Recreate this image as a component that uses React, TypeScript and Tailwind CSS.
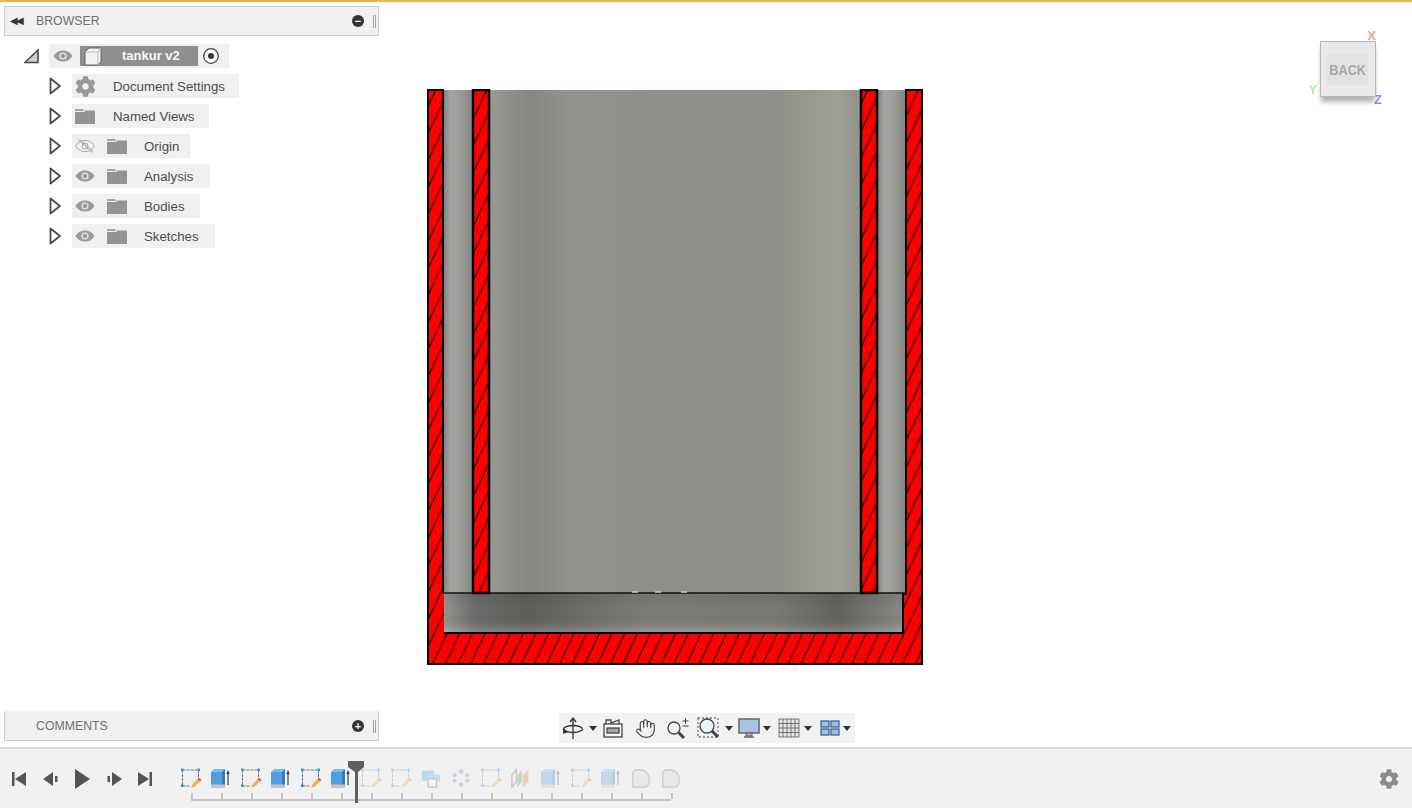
import { FaCog } from 'react-icons/fa'
import { Hand } from 'lucide-react'

// ─── Tree data ────────────────────────────────────────────────────────────────

const TREE_ROWS = [
  { label: 'Document Settings', kind: 'gear', pill: 'w-[167px]' },
  { label: 'Named Views', kind: 'named', pill: 'w-[137px]' },
  { label: 'Origin', kind: 'hidden', pill: 'w-[118px]' },
  { label: 'Analysis', kind: 'shown', pill: 'w-[138px]' },
  { label: 'Bodies', kind: 'shown', pill: 'w-[128px]' },
  { label: 'Sketches', kind: 'shown', pill: 'w-[143px]' },
] as const

const TIMELINE = [
  { kind: 'sketch', faded: false },
  { kind: 'extrude', faded: false },
  { kind: 'sketch', faded: false },
  { kind: 'extrude', faded: false },
  { kind: 'sketch', faded: false },
  { kind: 'extrude', faded: false },
  { kind: 'sketch', faded: true },
  { kind: 'sketch', faded: true },
  { kind: 'combine', faded: true },
  { kind: 'pattern', faded: true },
  { kind: 'sketch', faded: true },
  { kind: 'split', faded: true },
  { kind: 'extrude', faded: true },
  { kind: 'sketch', faded: true },
  { kind: 'extrude', faded: true },
  { kind: 'fillet', faded: true },
  { kind: 'fillet', faded: true },
] as const

// ─── Small icons ──────────────────────────────────────────────────────────────

function Eye({ off = false }: { off?: boolean }) {
  if (off) {
    return (
      <svg width="22" height="16" viewBox="0 0 22 16" fill="none" stroke="#a8a8a8" strokeWidth="1">
        <path d="M1.5 8C5 3 8 2.5 11 2.5S17 3 20.5 8C17 13 14 13.5 11 13.5S5 13 1.5 8Z" />
        <circle cx="11" cy="8" r="3" />
        <path d="M4 1.5 18 14.5M5.5 1 19.5 14" />
      </svg>
    )
  }
  return (
    <svg width="22" height="16" viewBox="0 0 22 16">
      <path d="M1.5 8C5 3 8 2.5 11 2.5S17 3 20.5 8C17 13 14 13.5 11 13.5S5 13 1.5 8Z" fill="#9a9a9a" />
      <circle cx="11" cy="8" r="3.6" fill="#e4e4e4" />
      <circle cx="11" cy="8" r="2.2" fill="#9a9a9a" />
    </svg>
  )
}

function Folder() {
  return (
    <svg width="22" height="16" viewBox="0 0 22 16" className="shrink-0">
      <path d="M1 1h8l1.5 2H1Z" fill="#a2a2a2" />
      <path d="M1 4h9l1.5-1.5H21V16H1Z" fill="#939393" />
    </svg>
  )
}

function Caret() {
  return (
    <svg width="14" height="18" viewBox="0 0 14 18" fill="#fff" stroke="#4a4a4a" strokeWidth="1.8">
      <path d="M2.5 1.5 12 9 2.5 16.5Z" strokeLinejoin="round" />
    </svg>
  )
}

function SketchIcon() {
  return (
    <svg width="22" height="22" viewBox="0 0 22 22">
      <path d="M2.500 3h16M2.500 3v16M2.500 19h8M18.500 3v9" stroke="#66717a" strokeWidth="1" strokeDasharray="3 1" fill="none" />
      <g fill="#3f8fd8">
        <rect x="1" y="1.500" width="2.500" height="2.500" />
        <rect x="17.500" y="1.500" width="2.500" height="2.500" />
        <rect x="1" y="17.500" width="2.500" height="2.500" />
      </g>
      <path d="M11 21l1.500-4 5-5 2.500 2.500-5 5Z" fill="#f0b650" />
      <path d="M17.500 12l1.500-1.500 2.500 2.500L20 14.500Z" fill="#ee4f4f" />
    </svg>
  )
}

function ExtrudeIcon() {
  return (
    <svg width="22" height="22" viewBox="0 0 22 22">
      <path d="M1 17.500h14V21l-2 0H1Z" fill="#c4c4c4" />
      <path d="M1 5l3-3h11v15.500H1Z" fill="#7dbcee" />
      <path d="M1 5h11v12.500H1Z" fill="#4f9fe3" />
      <path d="M12 5l3-3v15.500h-3Z" fill="#2f7cc0" />
      <path d="M18 18V5M16.800 7 18 4.500 19.200 7" stroke="#444" strokeWidth="1.200" fill="none" />
    </svg>
  )
}

function TimelineGlyph({ kind }: { kind: (typeof TIMELINE)[number]['kind'] }) {
  if (kind === 'sketch') return <SketchIcon />
  if (kind === 'extrude') return <ExtrudeIcon />
  if (kind === 'combine') {
    return (
      <svg width="22" height="22" viewBox="0 0 24 24">
        <path d="M2 4h13v11H2Z" fill="#4b9be0" />
        <path d="M8 8h14v8H8Z" fill="#6aaee6" />
        <rect x="9" y="13" width="9" height="9" fill="#fff" stroke="#666" strokeWidth="1.500" />
      </svg>
    )
  }
  if (kind === 'pattern') {
    return (
      <svg width="22" height="22" viewBox="0 0 24 24" fill="#4b9be0">
        <circle cx="12" cy="5" r="2.500" />
        <circle cx="12" cy="19" r="2.500" fill="#8a8a8a" />
        <circle cx="5" cy="9" r="2.200" fill="#8a8a8a" />
        <circle cx="19" cy="9" r="2.200" />
        <circle cx="5" cy="15" r="2.200" />
        <circle cx="19" cy="15" r="2.200" fill="#8a8a8a" />
      </svg>
    )
  }
  if (kind === 'split') {
    return (
      <svg width="22" height="22" viewBox="0 0 24 24">
        <path d="M2 22V9l5-6v13Z" fill="none" stroke="#666" strokeWidth="1.500" />
        <path d="M8 22V9l5-6v13Z" fill="#3fae49" />
        <path d="M14 22V9l6-6v13Z" fill="#e8772e" />
      </svg>
    )
  }
  return (
    <svg width="22" height="22" viewBox="0 0 24 24" fill="#d4d4d4" stroke="#777" strokeWidth="1.500">
      <path d="M3 22V8C3 5 5 3 8 3h3c6 0 10 5 10 10v3c0 3-3 6-6 6Z" />
    </svg>
  )
}

function NavCaret() {
  return (
    <svg width="8" height="5" viewBox="0 0 8 5" className="shrink-0">
      <path d="M0 0h8L4 5Z" fill="#333" />
    </svg>
  )
}

function PlayerIcon({ d }: { d: string }) {
  return (
    <svg width="20" height="20" viewBox="0 0 20 20" fill="#555">
      <path d={d} />
    </svg>
  )
}

// ─── Section drawing ──────────────────────────────────────────────────────────

function SectionDrawing() {
  const outerFill = 'M1 1H16V504H17V544H476V505H479V1H495V575H1Z'
  const outerLine = 'M17 544H476V505H479V1H495V575H1V1H16V504'
  return (
    <svg width="497" height="577" viewBox="0 0 497 577" className="block">
      <defs>
        <pattern id="hatch" width="12.700" height="27" patternUnits="userSpaceOnUse" patternTransform="translate(3 0)">
          <rect width="12.700" height="27" fill="#ff0000" />
          <path d="M-6.350 27 6.350 0M6.350 27 19.050 0" stroke="#2a0505" strokeWidth="1.300" />
        </pattern>
        <linearGradient id="wallGray" x1="0" x2="1" y1="0" y2="0">
          <stop offset="0" stop-color="#7f807c" />
          <stop offset="0.25" stop-color="#a4a5a0" />
          <stop offset="0.6" stop-color="#9a9b96" />
          <stop offset="1" stop-color="#83847f" />
        </linearGradient>
        <linearGradient id="centerGray" x1="0" x2="1" y1="0" y2="0">
          <stop offset="0" stop-color="#a3a49e" />
          <stop offset="0.1" stop-color="#999a93" />
          <stop offset="0.19" stop-color="#84867f" />
          <stop offset="0.28" stop-color="#92948d" />
          <stop offset="0.5" stop-color="#8d8f88" />
          <stop offset="0.72" stop-color="#8f9089" />
          <stop offset="0.85" stop-color="#a09f97" />
          <stop offset="0.93" stop-color="#8a8a83" />
          <stop offset="1" stop-color="#a6a49c" />
        </linearGradient>
        <linearGradient id="floorGray" x1="0" x2="1" y1="0" y2="0">
          <stop offset="0" stop-color="#959592" />
          <stop offset="0.07" stop-color="#6c6c6a" />
          <stop offset="0.18" stop-color="#5f5f5c" />
          <stop offset="0.45" stop-color="#7e7f7b" />
          <stop offset="0.72" stop-color="#7a7b76" />
          <stop offset="0.86" stop-color="#636360" />
          <stop offset="1" stop-color="#8a8a87" />
        </linearGradient>
        <linearGradient id="floorShade" x1="0" x2="0" y1="0" y2="1">
          <stop offset="0" stop-color="#000" stop-opacity="0.08" />
          <stop offset="0.5" stop-color="#000" stop-opacity="0" />
          <stop offset="1" stop-color="#fff" stop-opacity="0.22" />
        </linearGradient>
      </defs>

      <rect x="16" y="1" width="463" height="503" fill="url(#centerGray)" />
      <rect x="16" y="1" width="30" height="503" fill="url(#wallGray)" />
      <rect x="450" y="1" width="29" height="503" fill="url(#wallGray)" />
      <rect x="17" y="504" width="459" height="40" fill="url(#floorGray)" />
      <rect x="17" y="504" width="459" height="40" fill="url(#floorShade)" />

      <path d={outerFill} fill="url(#hatch)" />
      <path d={outerLine} fill="none" stroke="#000" strokeWidth="2" />
      <rect x="46" y="1" width="16" height="503" fill="url(#hatch)" stroke="#000" strokeWidth="2.500" />
      <rect x="434" y="1" width="16" height="503" fill="url(#hatch)" stroke="#000" strokeWidth="2.500" />
      <path d="M16 504H479" stroke="#111" strokeWidth="1.500" />
      <path d="M205 503h6M228 503h6M254 503h6" stroke="#c9c9c5" strokeWidth="1.500" />
    </svg>
  )
}

// ─── Panels ───────────────────────────────────────────────────────────────────

function PanelBar({ title, collapsed }: { title: string; collapsed: boolean }) {
  return (
    <div className={`flex h-[30px] w-[375px] items-center border border-[#cdcdcd] bg-[#f1f1f1] pl-[5px] pr-[1px] text-[12.300px] text-[#6f6f6f] ${collapsed ? 'border-t-[#f1f1f1]' : ''}`}>
      <span className="w-[26px] text-[10px] leading-none tracking-[-2px] text-[#333]">{collapsed ? '' : '◀◀'}</span>
      <span>{title}</span>
      <span className="ml-auto flex h-[12px] w-[12px] items-center justify-center rounded-full bg-[#333] text-[11px] font-bold leading-none text-white">
        {collapsed ? '+' : '−'}
      </span>
      <span className="ml-[9px] mr-[1px] h-[13px] w-[3px] border-x border-[#a5a5a5]" />
    </div>
  )
}

function Tree() {
  return (
    <div className="flex flex-col">
      <div className="ml-[20px] mt-[8px] flex h-[24px] items-center">
        <svg width="16" height="16" viewBox="0 0 16 16">
          <path d="M1 14.500 14 2V14.500Z" fill="#cfcfcf" stroke="#444" strokeWidth="1.500" />
        </svg>
        <div className="ml-[9px] flex h-[24px] w-[180px] items-center bg-[#f0f0f0] pl-[3px]">
          <Eye />
          <div className="ml-[6px] flex h-[20px] w-[118px] items-center bg-[#8f8f8f]">
            <svg width="24" height="20" viewBox="0 0 24 20" className="shrink-0">
              <path d="M5 6l4-4h12v14l-3 3H5Z" fill="#f2f2f2" stroke="#666" strokeWidth="1" />
              <path d="M5 6h13v13M18 6l3-4" fill="none" stroke="#bbb" strokeWidth="1" />
            </svg>
            <span className="ml-[18px] text-[13px] font-bold text-[#f6f6f6]">tankur v2</span>
          </div>
          <svg width="18" height="18" viewBox="0 0 18 18" className="ml-[4px]">
            <circle cx="9" cy="9" r="7.300" fill="#fff" stroke="#444" strokeWidth="1.300" />
            <circle cx="9" cy="9" r="3" fill="#333" />
          </svg>
        </div>
      </div>
      <div className="mt-[6px] flex flex-col gap-[6px]">
        {TREE_ROWS.map(row => (
          <div key={row.label} className="ml-[44px] flex h-[24px] items-center">
            <Caret />
            <div className={`ml-[10px] flex h-[24px] items-center bg-[#f0f0f0] text-[13.250px] text-[#4c4c4c] ${row.pill}`}>
              {row.kind === 'gear' && (
                <>
                  <FaCog className="ml-[3px] h-[21px] w-[21px] text-[#989898]" />
                  <span className="ml-[17px] mt-[1px]">{row.label}</span>
                </>
              )}
              {row.kind === 'named' && (
                <>
                  <span className="ml-[2px]">
                    <Folder />
                  </span>
                  <span className="ml-[17px] mt-[1px]">{row.label}</span>
                </>
              )}
              {(row.kind === 'hidden' || row.kind === 'shown') && (
                <>
                  <span className="ml-[2px]">
                    <Eye off={row.kind === 'hidden'} />
                  </span>
                  <span className="ml-[10px]">
                    <Folder />
                  </span>
                  <span className="ml-[16px] mt-[1px]">{row.label}</span>
                </>
              )}
            </div>
          </div>
        ))}
      </div>
    </div>
  )
}

function ViewCube() {
  return (
    <div className="absolute right-[25px] top-[23px] h-[84px] w-[80px]">
      <span className="absolute right-[11px] top-[1px] text-[13px] font-bold text-[#f59a9f] blur-[0.4px]">X</span>
      <span className="absolute bottom-[10px] left-[2px] text-[12px] font-bold text-[#a5eea5] blur-[0.4px]">Y</span>
      <span className="absolute bottom-0 right-[5px] text-[13px] font-bold text-[#8f8fee] blur-[0.4px]">Z</span>
      <div className="absolute left-[13px] top-[16px] flex h-[56px] w-[56px] items-center justify-center border border-[#b5b5b5] bg-[#e9e9e9] shadow-[0_6px_5px_-1px_rgba(0,0,0,0.3)]">
        <span className="bg-[#e2e2e3] px-[3px] py-[8px] text-[15px] font-bold leading-none text-[#a2a4a8] blur-[0.3px] [transform:scaleX(0.85)]">BACK</span>
      </div>
    </div>
  )
}

function NavBar() {
  return (
    <div className="ml-[180px] mt-auto mb-[4px] flex h-[30px] w-[296px] items-center bg-[#f2f2f2] pl-[3px]">
      <svg width="22" height="24" viewBox="0 0 22 24" fill="none" stroke="#333" strokeWidth="1.300">
        <path d="M11 23V3M8 6l3-4 3 4" />
        <ellipse cx="11" cy="13" rx="9.500" ry="3.500" />
        <path d="M1 13l4 3-4 1" fill="#333" />
      </svg>
      <span className="ml-[5px]"><NavCaret /></span>
      <svg width="22" height="22" viewBox="0 0 22 22" fill="none" stroke="#444" strokeWidth="1.300" className="ml-[5px]">
        <rect x="2" y="7" width="18" height="13" fill="#f7f7f7" />
        <rect x="5" y="11" width="12" height="5" fill="#a9a9a9" />
        <path d="M4 7V3h5v3l8-3v4" />
      </svg>
      <Hand size={21} strokeWidth={1.200} color="#333" className="ml-[11px]" />
      <svg width="24" height="22" viewBox="0 0 24 22" fill="none" stroke="#444" strokeWidth="1.300" className="ml-[9px]">
        <circle cx="9" cy="11" r="6" fill="#f2f7fa" />
        <path d="M13.500 15.500 19 21" strokeWidth="3" />
        <path d="M17.500 4h6M20.500 1v6M17.500 9h6" strokeWidth="1" />
      </svg>
      <svg width="24" height="24" viewBox="0 0 24 24" fill="none" stroke="#444" strokeWidth="1.300" className="ml-[8px]">
        <rect x="1" y="2" width="20" height="19" stroke="#777" strokeDasharray="2 2" />
        <circle cx="10" cy="10" r="7" fill="#eef5f9" />
        <path d="M15 15l6 6" strokeWidth="3" />
      </svg>
      <span className="ml-[4px]"><NavCaret /></span>
      <svg width="22" height="22" viewBox="0 0 22 22" className="ml-[5px]">
        <rect x="1" y="2" width="20" height="14" fill="#a7c2e2" stroke="#666" strokeWidth="1.500" />
        <path d="M8 16h6v3H8Z" fill="#aaa" stroke="#666" />
        <path d="M6 20h10" stroke="#666" strokeWidth="1.500" />
      </svg>
      <span className="ml-[3px]"><NavCaret /></span>
      <svg width="22" height="20" viewBox="0 0 22 20" fill="#e6e6e6" stroke="#666" strokeWidth="0.900" className="ml-[7px]">
        <path d="M1 1h20v18H1ZM1 5.500h20M1 10h20M1 14.500h20M5 1v18M9 1v18M13 1v18M17 1v18" />
      </svg>
      <span className="ml-[4px]"><NavCaret /></span>
      <svg width="20" height="16" viewBox="0 0 20 16" fill="#9ec0e6" stroke="#3e6690" strokeWidth="1.300" className="ml-[8px]">
        <rect x="1" y="1" width="8" height="6" />
        <rect x="11" y="1" width="8" height="6" />
        <rect x="1" y="9" width="8" height="6" />
        <rect x="11" y="9" width="8" height="6" />
      </svg>
      <span className="ml-[3px]"><NavCaret /></span>
    </div>
  )
}

function Timeline() {
  return (
    <footer className="flex h-[61px] shrink-0 items-center border-t-2 border-[#d8d8d8] bg-[#f1f1f1]">
      <div className="ml-[9px] flex w-[171px] items-center gap-[11.500px]">
        <PlayerIcon d="M3 3h2.500v14H3ZM17 3v14L6 10Z" />
        <PlayerIcon d="M2 10l10-7v14ZM14 7h2.500v6H14Z" />
        <PlayerIcon d="M3 0l15 10L3 20Z" />
        <PlayerIcon d="M18 10L8 3v14ZM3.500 7H6v6H3.500Z" />
        <PlayerIcon d="M17 3h-2.500v14H17ZM3 3v14l11-7Z" />
      </div>
      <div className="relative ml-[-4px] h-[59px] w-[510px]">
        <div className="flex pt-[18px]">
          {TIMELINE.map((item, idx) => (
            <div key={idx} className={`flex w-[30px] justify-center ${item.faded ? 'opacity-30' : ''}`}>
              <TimelineGlyph kind={item.kind} />
            </div>
          ))}
        </div>
        {/* Ruler */}
        <div className="absolute left-[15px] top-[50px] flex h-[2px] w-[480px] bg-[#c4c4c4]" />
        <div className="absolute left-[15px] top-[44px] flex w-[482px] justify-between">
          {TIMELINE.map((_, idx) => (
            <span key={idx} className="h-[6px] w-[2px] bg-[#c4c4c4]" />
          ))}
        </div>
        {/* Playhead */}
        <svg width="18" height="42" viewBox="0 0 18 42" className="absolute left-[171px] top-[12px]">
          <path d="M1 0h16v6l-6 5v31H8V11L1 6Z" fill="#5f5f5f" />
        </svg>
      </div>
      <FaCog className="ml-auto mr-[13px] h-[20px] w-[20px] text-[#8c8c8c]" />
    </footer>
  )
}

export default function App() {
  return (
    <div className="flex h-[808px] w-[1412px] flex-col overflow-hidden bg-white font-['Liberation_Sans',sans-serif]">
      <div className="h-[2px] shrink-0 bg-[#f7b14a]" />
      <main className="relative flex min-h-0 flex-1">
        <aside className="ml-[4px] flex w-[375px] shrink-0 flex-col justify-between pb-[6px] pt-[4px]">
          <div>
            <PanelBar title="BROWSER" collapsed={false} />
            <Tree />
          </div>
          <PanelBar title="COMMENTS" collapsed={true} />
        </aside>
        <section className="flex flex-1 flex-col">
          <div className="ml-[48px] mt-[87px]">
            <SectionDrawing />
          </div>
          <NavBar />
        </section>
        <ViewCube />
      </main>
      <Timeline />
    </div>
  )
}
